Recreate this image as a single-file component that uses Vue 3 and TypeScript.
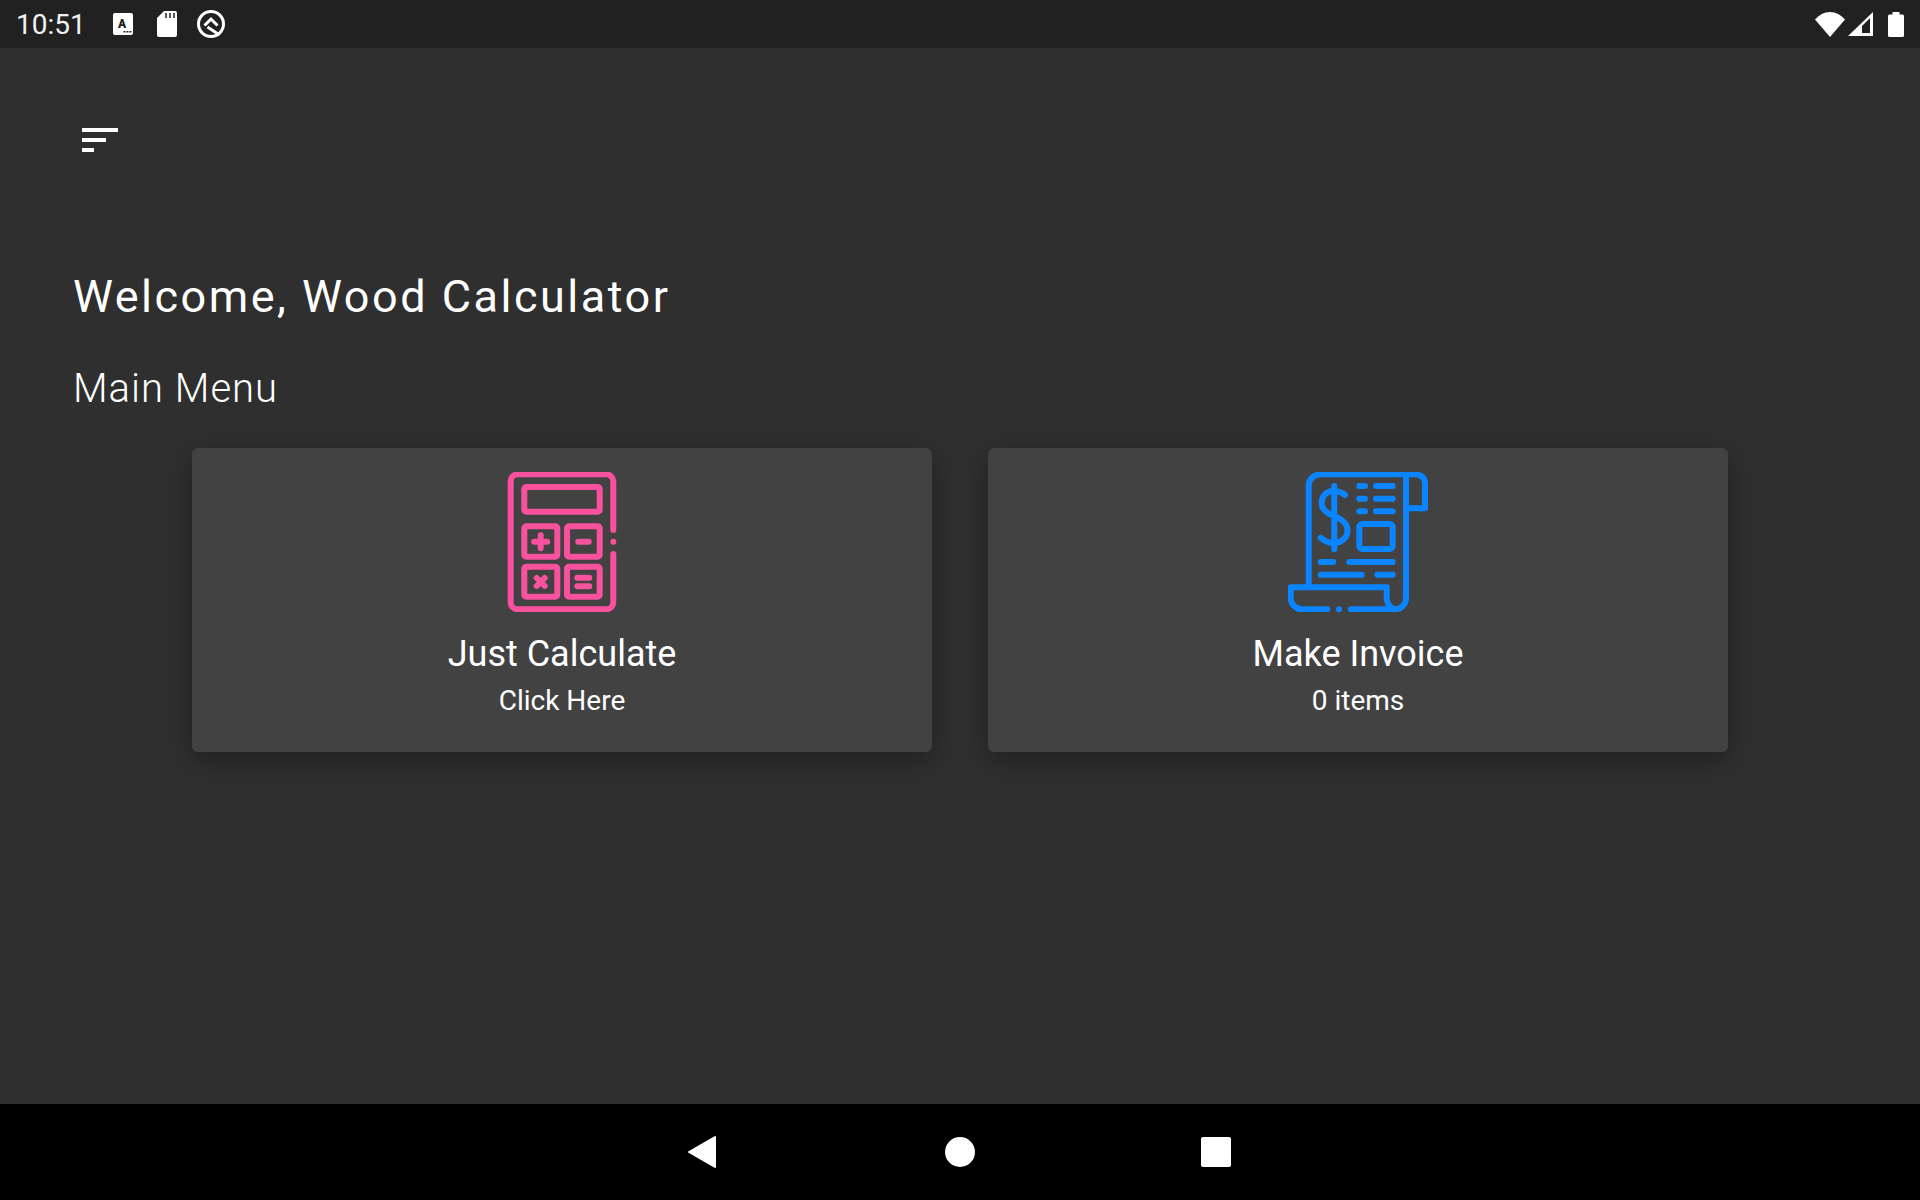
<template>
  <div class="screen">
    <header class="status-bar">
      <span class="time">10:51</span>
      <div class="status-left">
        <svg class="ic-a" width="20" height="22" viewBox="0 0 20 22">
          <rect width="20" height="22" rx="2" fill="#fff" />
          <text x="9" y="15" text-anchor="middle" class="ic-a-letter">A</text>
          <path d="M10.500 18.800h2M13.500 18.800h2M16.500 18.800h2" stroke="#212121" stroke-width="1.600" />
        </svg>
        <svg width="20" height="26" viewBox="0 0 20 26">
          <path d="M7 0H18a2 2 0 0 1 2 2V24a2 2 0 0 1-2 2H2a2 2 0 0 1-2-2V7Z" fill="#fff" />
          <path d="M9 2v5M13 2v5M17 2v5" stroke="#212121" stroke-width="1.500" />
        </svg>
        <svg width="28" height="28" viewBox="0 0 28 28">
          <circle cx="14" cy="14" r="12.500" fill="none" stroke="#fff" stroke-width="3" />
          <path d="M7.500 15.500 14 9 20.500 15.500" fill="none" stroke="#fff" stroke-width="3" />
          <path d="M10.500 17 22.500 25" stroke="#fff" stroke-width="3" />
        </svg>
      </div>
      <div class="status-right">
        <svg width="30" height="25" viewBox="0 0 30 25">
          <path d="M0 7.500C4 3 9 0 15 0s11 3 15 7.500L15 25Z" fill="#fff" />
        </svg>
        <svg width="25" height="24" viewBox="0 0 25 24">
          <path d="M25 0V24H0ZM22 6 14 14V21H22Z" fill="#fff" fill-rule="evenodd" />
        </svg>
        <svg class="ic-battery" width="16" height="25" viewBox="0 0 16 25">
          <path d="M4.500 0H11.500V2.500H14.500a1.500 1.500 0 0 1 1.500 1.500V23.500a1.500 1.500 0 0 1-1.500 1.500H1.500A1.500 1.500 0 0 1 0 23.500V4a1.500 1.500 0 0 1 1.500-1.500H4.500Z" fill="#fff" />
        </svg>
      </div>
    </header>

    <main class="content">
      <button class="menu-btn" type="button" aria-label="Menu">
        <span class="bar bar-lg"></span>
        <span class="bar bar-md"></span>
        <span class="bar bar-sm"></span>
      </button>

      <h1 class="welcome">Welcome, Wood Calculator</h1>
      <h2 class="section-title">Main Menu</h2>

      <div class="cards">
        <section v-for="card in cards" :key="card.title" class="card">
          <svg v-if="card.icon === 'calc'" class="card-icon calc" viewBox="0 0 140 140">
            <path d="M121.300 58V9.300a7 7 0 0 0-7-7H25.700a7 7 0 0 0-7 7V130.300a7 7 0 0 0 7 7H114.300a7 7 0 0 0 7-7V82" />
            <path d="M121.300 69.700h.01" />
            <rect x="32.300" y="15" width="75.400" height="24.700" rx="2" />
            <rect x="32.300" y="54.300" width="33" height="30.400" rx="2" />
            <rect x="75" y="54.300" width="32.700" height="30.400" rx="2" />
            <rect x="32.300" y="94.700" width="33" height="30" rx="2" />
            <rect x="75" y="94.700" width="32.700" height="30" rx="2" />
            <path d="M42.200 69.700H55.200M48.700 63.200V76.200" />
            <path d="M86.300 69.700H96.700" />
            <path d="M44.700 106 52.700 114M52.700 106 44.700 114" />
            <path d="M85.300 105.700H97.300M85.300 114.300H97.300" />
          </svg>
          <svg v-else class="card-icon invoice" viewBox="0 0 140 140">
            <path d="M20.700 113V14a11.700 11.700 0 0 1 11.700-11.700H128a9 9 0 0 1 9 9V36.300H118" />
            <path d="M39.300 137.300H14A11.300 11.300 0 0 1 2.700 126V115.300H98.700V125a12.300 12.300 0 0 0 8.300 12.300" />
            <path d="M51 137.300h.01" />
            <path d="M63 137.300H107a11 11 0 0 0 11-11V2.300" />
            <path d="M46.300 14V77.300" />
            <path d="M57 23C53.500 20.300 50 19 45.500 19 38.500 19 33.700 24 33.700 31 33.700 38 39 41.500 46 44 54 47 59.500 51 59.500 58.500 59.500 66 53 71 46 71 40.500 71 36.500 69 32.700 65.700" />
            <path d="M71.300 14H77M88 14H104.700M71.300 26.700H77M88 26.700H104.700M71.300 39.300H77M88 39.300H104.700" />
            <rect x="71.300" y="52" width="33.400" height="25" rx="3" />
            <path d="M32.700 90H45.300M61.300 90H104.700M32.700 102.700H73.700M89.300 102.700H104.700" />
          </svg>
          <div class="card-title">{{ card.title }}</div>
          <div class="card-sub">{{ card.sub }}</div>
        </section>
      </div>
    </main>

    <nav class="nav-bar">
      <svg width="30" height="34" viewBox="0 0 30 34">
        <path d="M28 2V32L2 17Z" fill="#fff" stroke="#fff" stroke-width="2" stroke-linejoin="round" />
      </svg>
      <span class="nav-home"></span>
      <span class="nav-recent"></span>
    </nav>
  </div>
</template>

<script setup lang="ts">
interface MenuCard {
  icon: 'calc' | 'invoice';
  title: string;
  sub: string;
}

const cards: MenuCard[] = [
  { icon: 'calc', title: 'Just Calculate', sub: 'Click Here' },
  { icon: 'invoice', title: 'Make Invoice', sub: '0 items' },
];
</script>

<style scoped>
.screen {
  width: 1920px;
  height: 1200px;
  display: flex;
  flex-direction: column;
  background: #2f2f2f;
  color: #fff;
  font-family: Roboto, "Liberation Sans", sans-serif;
  overflow: hidden;
}
.status-bar {
  height: 48px;
  flex: none;
  display: flex;
  align-items: center;
  padding: 0 16px 0 16px;
  background: #212121;
}
.time { font-size: 28px; width: 97px; color: #f2f2f2; }
.status-left { display: flex; align-items: center; gap: 24px; }
.status-left svg:nth-child(3) { margin-left: -4px; }
.ic-a-letter { font-family: Roboto, sans-serif; font-size: 12px; font-weight: 900; fill: #212121; }
.status-right { margin-left: auto; display: flex; align-items: center; gap: 3px; }
.ic-battery { margin-left: 12px; }

.content {
  flex: 1;
  padding: 80px 0 0;
}
.menu-btn {
  display: flex;
  flex-direction: column;
  gap: 6px;
  margin-left: 82px;
  padding: 0;
  background: none;
  border: none;
}
.bar { display: block; height: 4px; background: #fff; }
.bar-lg { width: 36px; }
.bar-md { width: 24px; }
.bar-sm { width: 12px; }
.welcome {
  margin: 117px 0 0 73px;
  font-size: 45px;
  line-height: 56px;
  font-weight: 400;
  letter-spacing: 2.500px;
}
.section-title {
  margin: 39px 0 0 73px;
  font-size: 40px;
  line-height: 50px;
  font-weight: 300;
  letter-spacing: 1px;
}
.cards {
  display: grid;
  grid-template-columns: 1fr 1fr;
  gap: 56px;
  margin: 34px 192px 0;
}
.card {
  height: 304px;
  padding-top: 24px;
  box-sizing: border-box;
  display: flex;
  flex-direction: column;
  align-items: center;
  background: #424242;
  border-radius: 6px;
  box-shadow: 0 8px 24px rgba(0, 0, 0, 0.32);
}
.card-icon {
  width: 140px;
  height: 140px;
  fill: none;
  stroke-width: 6px;
  stroke-linecap: round;
  stroke-linejoin: round;
}
.calc { stroke: #f8519e; }
.invoice { stroke: #0a84ff; }
.card-title { margin-top: 20px; font-size: 36px; line-height: 44px; }
.card-sub { margin-top: 7px; font-size: 28px; line-height: 36px; }

.nav-bar {
  height: 96px;
  flex: none;
  display: flex;
  align-items: center;
  background: #000;
  padding-left: 687px;
}
.nav-home {
  width: 30px;
  height: 30px;
  margin-left: 228px;
  border-radius: 50%;
  background: #fff;
}
.nav-recent {
  width: 30px;
  height: 30px;
  margin-left: 226px;
  border-radius: 2px;
  background: #fff;
}
</style>
